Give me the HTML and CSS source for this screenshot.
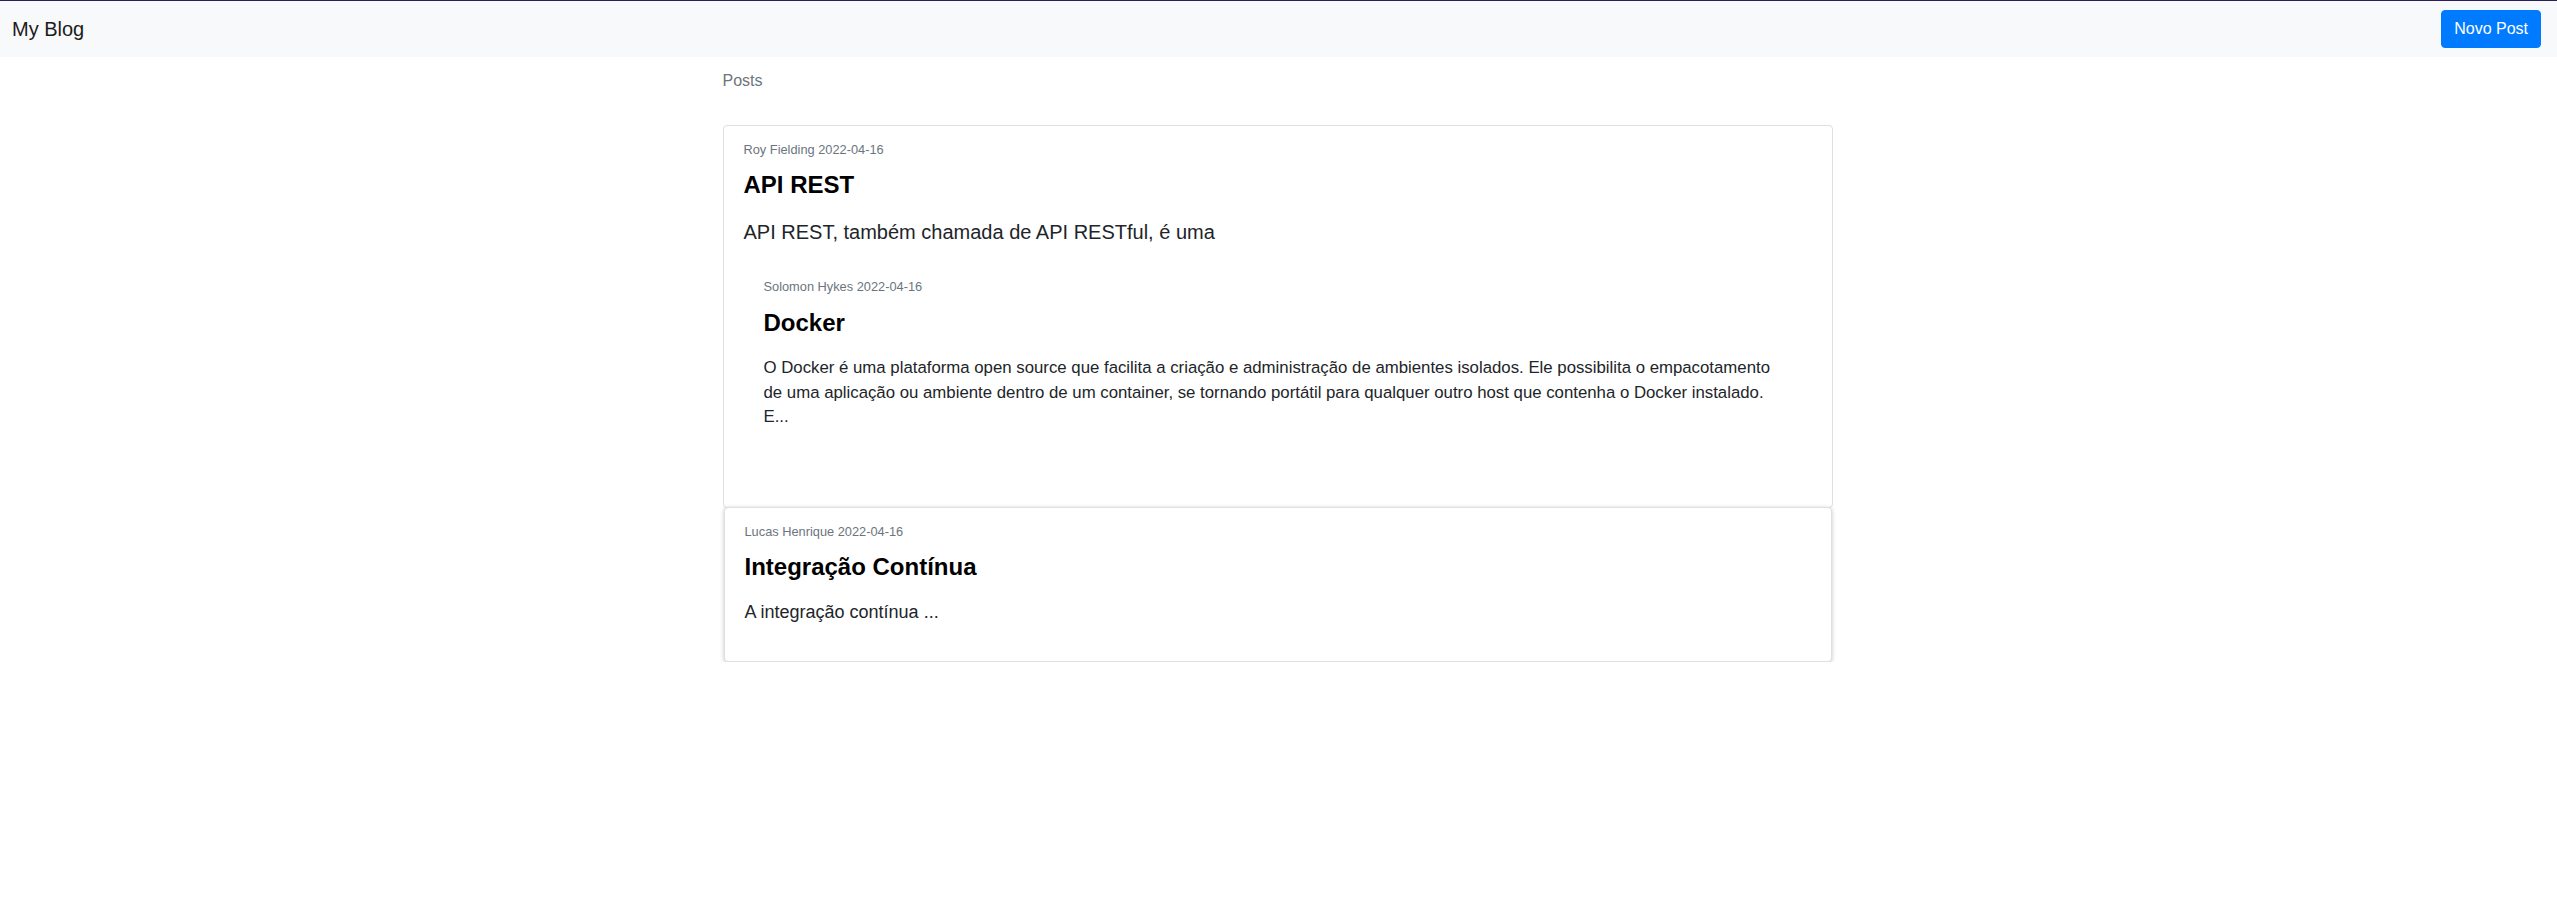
FILE: index.html
```html
<!DOCTYPE html>
<html lang="pt-BR">
<head>
<meta charset="utf-8">
<title>My Blog</title>
<link rel="stylesheet" href="styles.css">
</head>
<body>
<nav class="navbar">
  <a class="brand" href="#">My Blog</a>
  <button class="btn-primary" type="button">Novo Post</button>
</nav>
<main class="container">
  <div class="breadcrumb">Posts</div>
  <div class="post-list">
    <article class="post">
      <div class="meta">Roy Fielding 2022-04-16</div>
      <h4 class="title">API REST</h4>
      <p class="excerpt lead">API REST, também chamada de API RESTful, é uma</p>
      <article class="post nested">
        <div class="meta">Solomon Hykes 2022-04-16</div>
        <h4 class="title">Docker</h4>
        <p class="excerpt body-text">O Docker é uma plataforma open source que facilita a criação e administração de ambientes isolados. Ele possibilita o empacotamento de uma aplicação ou ambiente dentro de um container, se tornando portátil para qualquer outro host que contenha o Docker instalado. E...</p>
      </article>
    </article>
    <article class="post raised">
      <div class="meta">Lucas Henrique 2022-04-16</div>
      <h4 class="title">Integração Contínua</h4>
      <p class="excerpt medium">A integração contínua ...</p>
    </article>
  </div>
</main>
</body>
</html>
```

FILE: styles.css
```css
* { box-sizing: border-box; }

html, body {
  margin: 0;
  padding: 0;
  background: #fff;
}

body {
  font-family: "Liberation Sans", Arial, sans-serif;
  font-size: 16px;
  line-height: 1.5;
  color: #212529;
}

.navbar {
  display: flex;
  align-items: center;
  justify-content: space-between;
  background: #f8f9fa;
  border-top: 1px solid #2c1f5b;
  padding: 9px 16px 9px 12px;
}

.brand {
  font-size: 20px;
  line-height: 30px;
  color: #1c1c1c;
  text-decoration: none;
}

.btn-primary {
  font-family: "Liberation Sans", Arial, sans-serif;
  font-size: 16px;
  line-height: 24px;
  color: #fff;
  background: #007bff;
  border: 1px solid #007bff;
  border-radius: 4px;
  padding: 6px 12px;
  cursor: pointer;
}

.container {
  width: 1110px;
  margin: 0 auto;
  position: relative;
  left: -1px;
}

.breadcrumb {
  color: #6c757d;
  margin-top: 12px;
  margin-bottom: 32px;
}

.post-list {
  display: flex;
  flex-direction: column;
}

.post {
  border: 1px solid #dfdfdf;
  border-radius: 4px;
  padding: 14px 20px 0;
  background: #fff;
}

.post.nested {
  border: none;
  border-radius: 0;
  padding: 14px 21px 61px 20px;
}

.post.nested .meta {
  margin-bottom: 13px;
}

.post.nested .title {
  margin-bottom: 18px;
}

.post.raised {
  margin: -1px 1px 0;
  padding-bottom: 19px;
  box-shadow: 0 1px 4px rgba(0, 0, 0, 0.22);
  position: relative;
}

.meta {
  font-size: 12.8px;
  line-height: 19.2px;
  color: #6c757d;
  margin-bottom: 12px;
}

.title {
  margin: 0 0 17px;
  font-size: 24px;
  line-height: 28.8px;
  font-weight: 700;
  color: #000;
}

.excerpt {
  margin: 0 0 16px;
}

.excerpt.lead {
  font-size: 20px;
  line-height: 30px;
}

.excerpt.body-text {
  font-size: 16.8px;
  line-height: 24.5px;
}

.excerpt.medium {
  font-size: 18px;
  line-height: 27px;
}
```
